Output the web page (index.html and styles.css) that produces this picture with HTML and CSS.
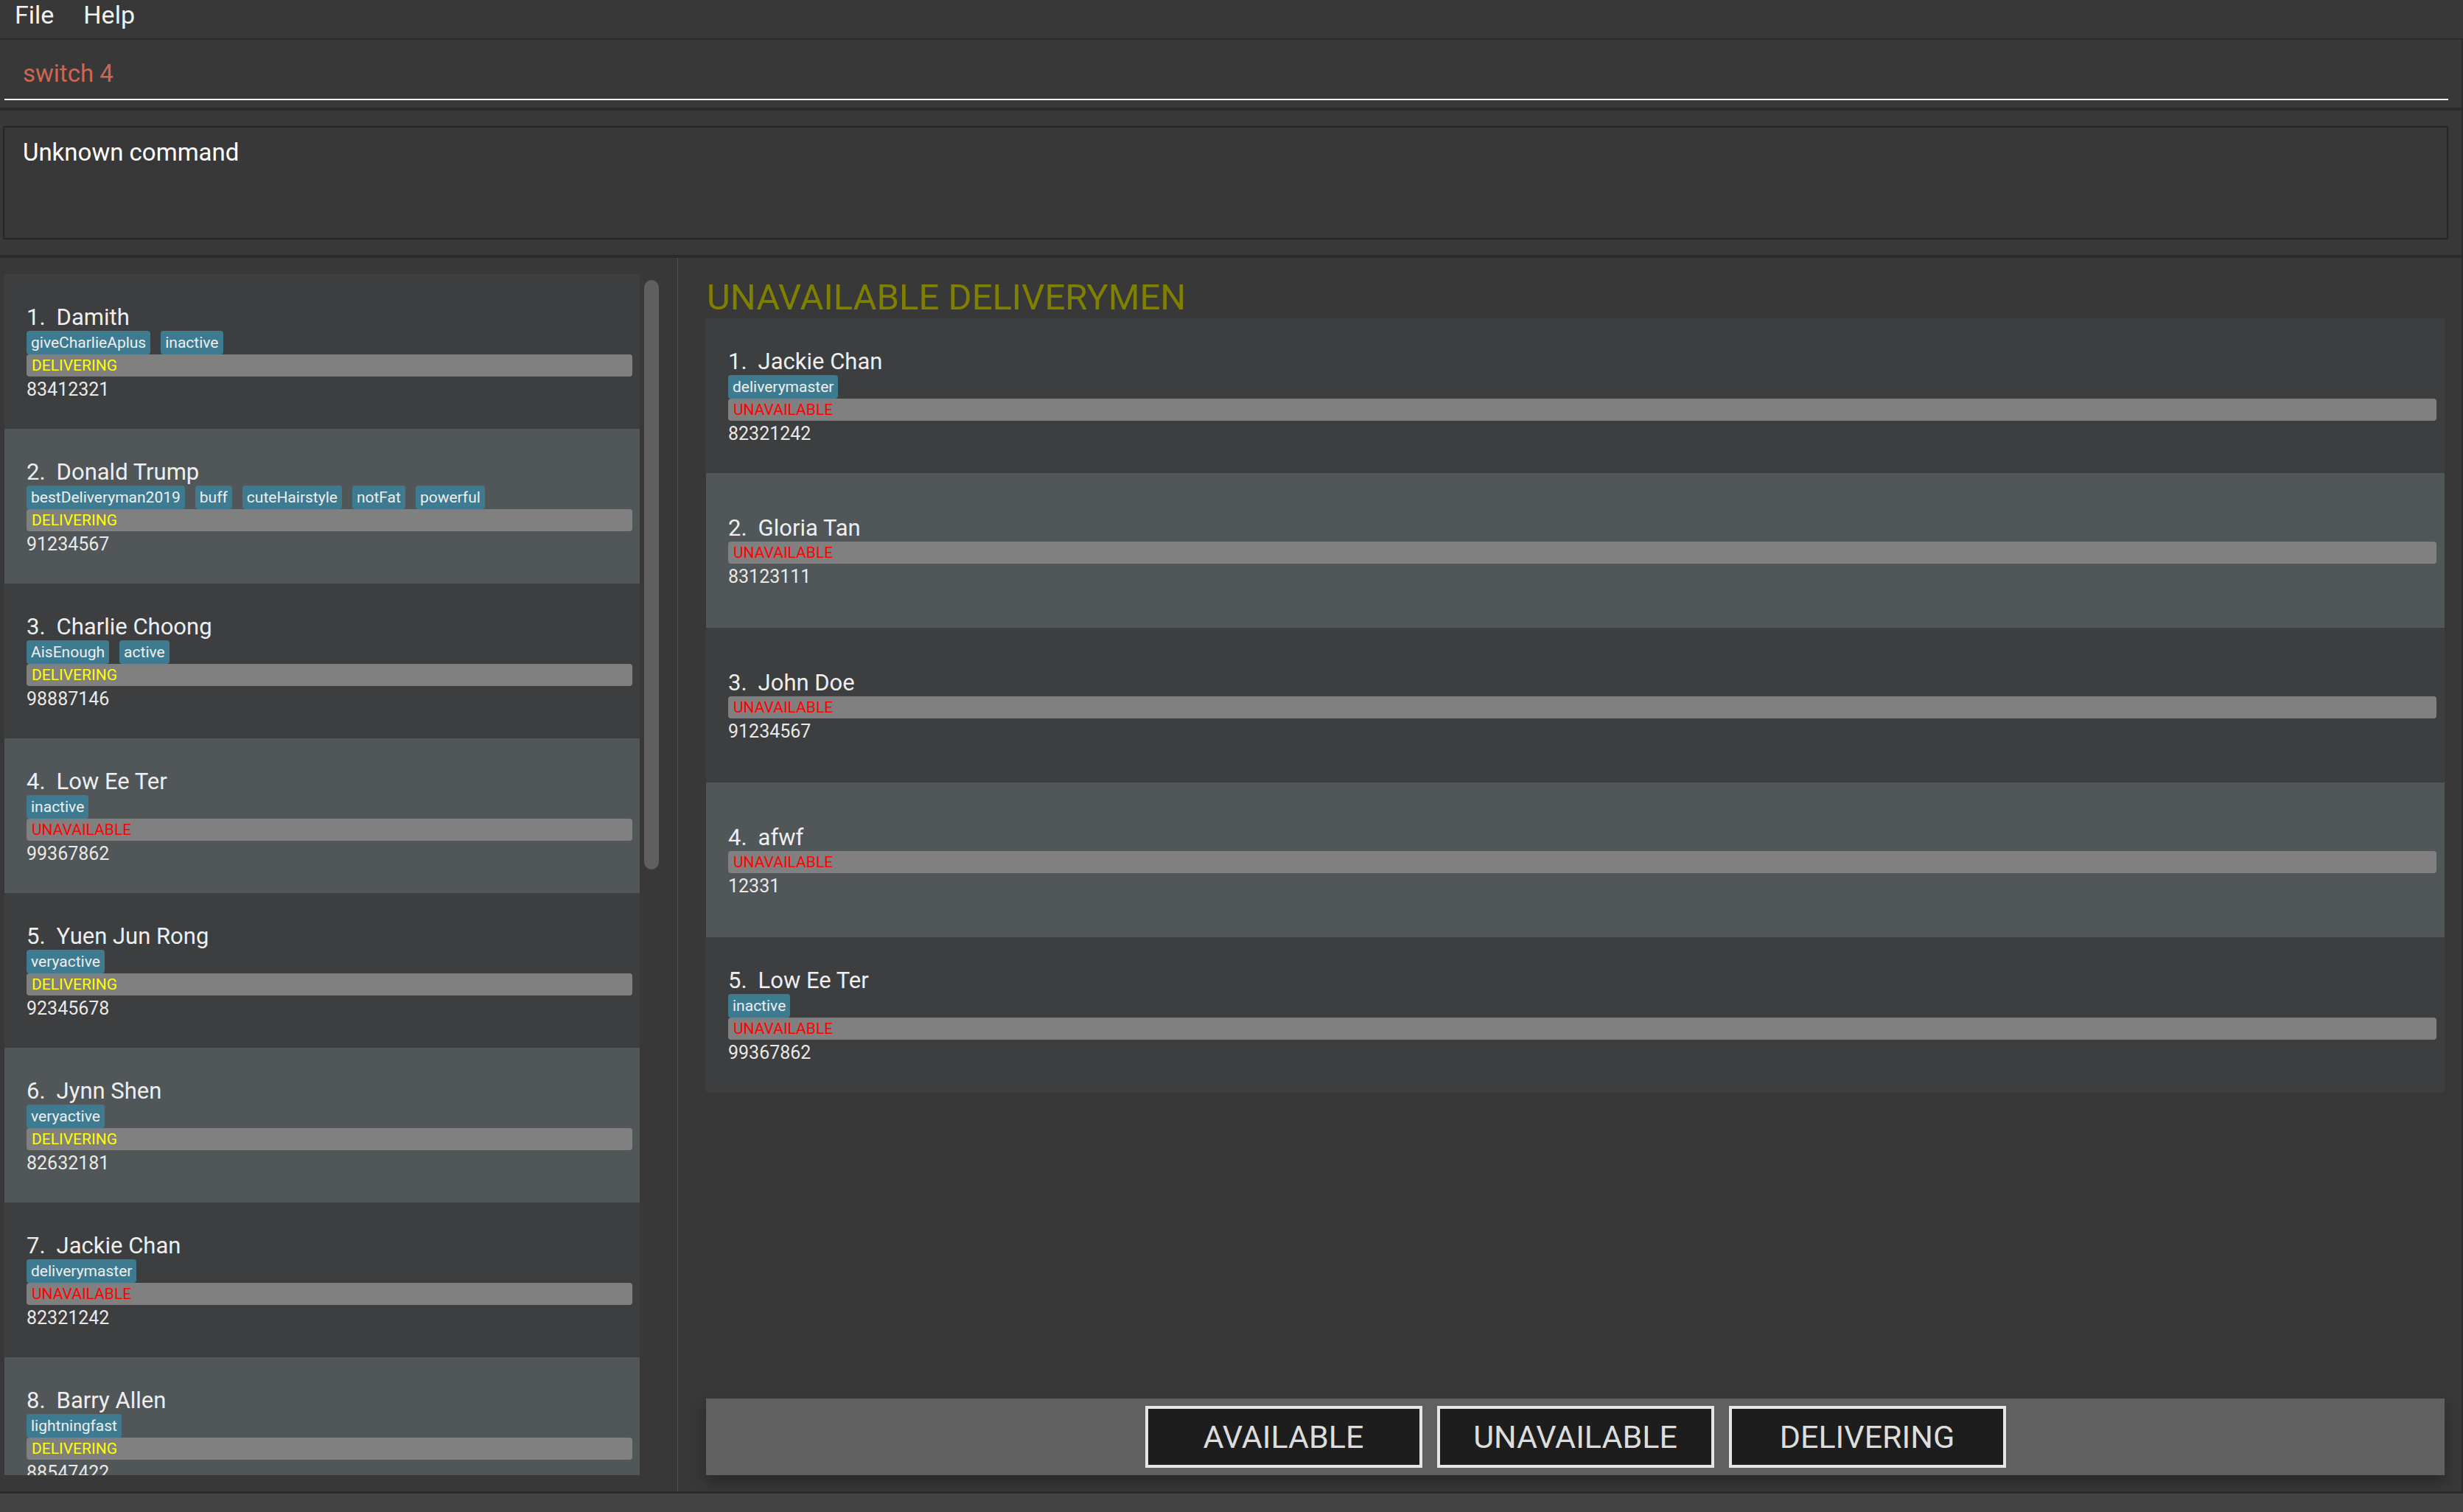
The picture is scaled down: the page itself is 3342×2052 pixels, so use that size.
FILE: index.html
```html
<!DOCTYPE html>
<html lang="en">
<head>
<meta charset="utf-8">
<title>Deliverymen</title>
<link rel="stylesheet" href="styles.css">
</head>
<body>
<div class="app">
  <div class="menubar">
    <span class="menu-item">File</span>
    <span class="menu-item">Help</span>
  </div>
  <div class="body-wrap">
    <div class="sep thin"></div>
    <div class="command-pane">
      <div class="command-field error">switch 4</div>
    </div>
    <div class="sep"></div>
    <div class="result-pane">
      <div class="result-box">Unknown command</div>
    </div>
    <div class="sep"></div>
    <div class="main">
      <div class="left-panel">
        <div class="list left-list">
          <div class="card even">
            <div class="card-body">
              <div class="name"><span class="idx">1.</span><span>Damith</span></div>
              <div class="tags"><span class="tag">giveCharlieAplus</span><span class="tag">inactive</span></div>
              <div class="status delivering">DELIVERING</div>
              <div class="phone">83412321</div>
            </div>
          </div>
          <div class="card odd">
            <div class="card-body">
              <div class="name"><span class="idx">2.</span><span>Donald Trump</span></div>
              <div class="tags"><span class="tag">bestDeliveryman2019</span><span class="tag">buff</span><span class="tag">cuteHairstyle</span><span class="tag">notFat</span><span class="tag">powerful</span></div>
              <div class="status delivering">DELIVERING</div>
              <div class="phone">91234567</div>
            </div>
          </div>
          <div class="card even">
            <div class="card-body">
              <div class="name"><span class="idx">3.</span><span>Charlie Choong</span></div>
              <div class="tags"><span class="tag">AisEnough</span><span class="tag">active</span></div>
              <div class="status delivering">DELIVERING</div>
              <div class="phone">98887146</div>
            </div>
          </div>
          <div class="card odd">
            <div class="card-body">
              <div class="name"><span class="idx">4.</span><span>Low Ee Ter</span></div>
              <div class="tags"><span class="tag">inactive</span></div>
              <div class="status unavailable">UNAVAILABLE</div>
              <div class="phone">99367862</div>
            </div>
          </div>
          <div class="card even">
            <div class="card-body">
              <div class="name"><span class="idx">5.</span><span>Yuen Jun Rong</span></div>
              <div class="tags"><span class="tag">veryactive</span></div>
              <div class="status delivering">DELIVERING</div>
              <div class="phone">92345678</div>
            </div>
          </div>
          <div class="card odd">
            <div class="card-body">
              <div class="name"><span class="idx">6.</span><span>Jynn Shen</span></div>
              <div class="tags"><span class="tag">veryactive</span></div>
              <div class="status delivering">DELIVERING</div>
              <div class="phone">82632181</div>
            </div>
          </div>
          <div class="card even">
            <div class="card-body">
              <div class="name"><span class="idx">7.</span><span>Jackie Chan</span></div>
              <div class="tags"><span class="tag">deliverymaster</span></div>
              <div class="status unavailable">UNAVAILABLE</div>
              <div class="phone">82321242</div>
            </div>
          </div>
          <div class="card odd">
            <div class="card-body">
              <div class="name"><span class="idx">8.</span><span>Barry Allen</span></div>
              <div class="tags"><span class="tag">lightningfast</span></div>
              <div class="status delivering">DELIVERING</div>
              <div class="phone">88547422</div>
            </div>
          </div>
        </div>
        <div class="scroll-track"><div class="scroll-thumb"></div></div>
      </div>
      <div class="divider"></div>
      <div class="right-panel">
        <div class="panel-title">UNAVAILABLE DELIVERYMEN</div>
        <div class="list right-list">
          <div class="card even wide">
            <div class="card-body">
              <div class="name"><span class="idx">1.</span><span>Jackie Chan</span></div>
              <div class="tags"><span class="tag">deliverymaster</span></div>
              <div class="status unavailable">UNAVAILABLE</div>
              <div class="phone">82321242</div>
            </div>
          </div>
          <div class="card odd wide">
            <div class="card-body">
              <div class="name"><span class="idx">2.</span><span>Gloria Tan</span></div>
              <div class="status unavailable">UNAVAILABLE</div>
              <div class="phone">83123111</div>
            </div>
          </div>
          <div class="card even wide">
            <div class="card-body">
              <div class="name"><span class="idx">3.</span><span>John Doe</span></div>
              <div class="status unavailable">UNAVAILABLE</div>
              <div class="phone">91234567</div>
            </div>
          </div>
          <div class="card odd wide">
            <div class="card-body">
              <div class="name"><span class="idx">4.</span><span>afwf</span></div>
              <div class="status unavailable">UNAVAILABLE</div>
              <div class="phone">12331</div>
            </div>
          </div>
          <div class="card even wide">
            <div class="card-body">
              <div class="name"><span class="idx">5.</span><span>Low Ee Ter</span></div>
              <div class="tags"><span class="tag">inactive</span></div>
              <div class="status unavailable">UNAVAILABLE</div>
              <div class="phone">99367862</div>
            </div>
          </div>
        </div>
        <div class="spacer"></div>
        <div class="button-bar">
          <div class="btn">AVAILABLE</div>
          <div class="btn">UNAVAILABLE</div>
          <div class="btn">DELIVERING</div>
        </div>
      </div>
    </div>
  </div>
  <div class="sep bottom"></div>
  <div class="statusbar"></div>
</div>
</body>
</html>
```

FILE: styles.css
```css
* { box-sizing: border-box; }
html, body {
  margin: 0;
  padding: 0;
  background: #383838;
}
body {
  width: 3342px;
  height: 2052px;
  overflow: hidden;
  font-family: Roboto, "Liberation Sans", sans-serif;
  color: #eeeeee;
}
.app {
  display: flex;
  flex-direction: column;
  height: 2052px;
  width: 3342px;
}
.menubar {
  height: 52px;
  display: flex;
  align-items: flex-start;
  padding-left: 0;
  background: #383838;
}
.menu-item {
  font-size: 34px;
  line-height: 40px;
  padding: 0 20px;
  color: #f2f2f2;
}
.body-wrap {
  display: flex;
  flex-direction: column;
  border-right: 2px solid #2a2a2a;
  flex: 1;
  min-height: 0;
}
.sep {
  height: 4px;
  background: #2b2b2b;
  flex: none;
}
.sep.thin { height: 2px; }
.sep.bottom { height: 3px; }
.command-pane {
  height: 92px;
  padding: 11px 18px 10px 6px;
  flex: none;
}
.command-field {
  height: 71px;
  border-bottom: 2px solid #ffffff;
  padding-left: 25px;
  font-size: 33px;
  line-height: 69px;
  color: #ffffff;
}
.command-field.error { color: #d06651; }
.result-pane {
  height: 196px;
  padding: 21px 18px 21px 4px;
  flex: none;
}
.result-box {
  height: 154px;
  border: 2px solid #262626;
  padding: 14px 25px;
  font-size: 33px;
  line-height: 40px;
  color: #ffffff;
}
.main {
  display: flex;
  flex: 1;
  min-height: 0;
}
.left-panel {
  width: 919px;
  flex: none;
  display: flex;
  padding: 22px 0 22px 6px;
  gap: 6px;
}
.list {
  display: flex;
  flex-direction: column;
  overflow: hidden;
}
.left-list {
  width: 862px;
  height: 1630px;
}
.scroll-track {
  width: 20px;
  padding-top: 8px;
}
.scroll-thumb {
  width: 20px;
  height: 800px;
  border-radius: 10px;
  background: #5f5f5f;
}
.divider {
  width: 1px;
  background: #4f4f4f;
  flex: none;
}
.right-panel {
  flex: 1;
  display: flex;
  flex-direction: column;
  padding: 25px 23px 22px 38px;
  min-width: 0;
}
.panel-title {
  font-size: 49px;
  line-height: 57px;
  color: #808000;
  padding-left: 1px;
  flex: none;
}
.card {
  height: 210px;
  flex: none;
  display: flex;
  align-items: center;
  padding: 4px 10px 0 30px;
}
.card.wide { padding-right: 11px; }
.card.even { background: #3c3e3f; }
.card.odd { background: #515658; }
.card-body {
  width: 100%;
  display: flex;
  flex-direction: column;
}
.name {
  font-size: 31px;
  line-height: 37px;
  color: #eeeeee;
  display: flex;
  gap: 15px;
  white-space: nowrap;
}
.tags {
  display: flex;
  gap: 14px;
  height: 32px;
}
.tag {
  height: 32px;
  padding: 0 6px;
  border-radius: 4px;
  background: #3e7b91;
  color: #eeeeee;
  font-size: 21px;
  line-height: 32px;
  white-space: nowrap;
}
.status {
  height: 30px;
  border-radius: 4px;
  background: #808080;
  padding-left: 7px;
  font-size: 21px;
  line-height: 30px;
}
.status.delivering { color: #ffff00; }
.status.unavailable { color: #ff0000; }
.phone {
  font-size: 25px;
  line-height: 35px;
  color: #e8e8e8;
}
.spacer { flex: 1; }
.button-bar {
  height: 104px;
  flex: none;
  background: #606060;
  display: flex;
  justify-content: center;
  align-items: center;
  gap: 20px;
  box-shadow: 0 10px 18px rgba(0, 0, 0, 0.28);
}
.btn {
  width: 376px;
  height: 84px;
  border: 4px solid #e6e6e6;
  background: #1d1d1d;
  color: #dddddd;
  font-size: 43px;
  line-height: 76px;
  text-align: center;
}
.statusbar {
  height: 25px;
  background: #434343;
  flex: none;
}
```
